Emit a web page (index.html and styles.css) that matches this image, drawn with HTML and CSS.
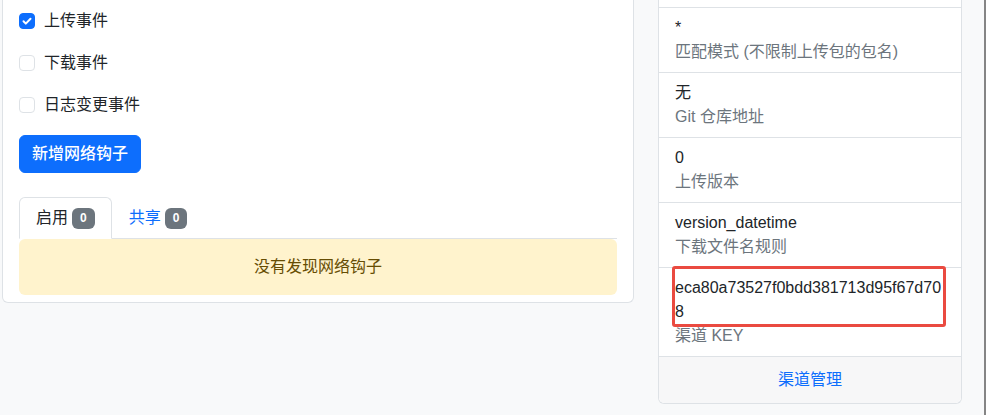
FILE: index.html
```html
<!DOCTYPE html>
<html lang="zh-CN">
<head>
    <meta charset="UTF-8">
    <meta name="viewport" content="width=device-width, initial-scale=1.0">
    <title>渠道详情</title>
    <link rel="stylesheet" href="styles.css">
</head>
<body>
    <div class="page">
        <div class="col-main">
            <div class="card card-cut">
                <div class="card-body">
                    <label class="check">
                        <span class="box checked">
                            <svg viewBox="0 0 16 16" width="16" height="16"><path d="M4.5 8.3l2.3 2.3 4.7-4.9" fill="none" stroke="#fff" stroke-width="2" stroke-linecap="round" stroke-linejoin="round"/></svg>
                        </span>
                        上传事件
                    </label>
                    <label class="check">
                        <span class="box"></span>
                        下载事件
                    </label>
                    <label class="check">
                        <span class="box"></span>
                        日志变更事件
                    </label>

                    <button class="btn btn-primary">新增网络钩子</button>

                    <div class="tabs">
                        <a class="tab active">启用 <span class="badge">0</span></a>
                        <a class="tab">共享 <span class="badge">0</span></a>
                    </div>
                    <div class="alert">没有发现网络钩子</div>
                </div>
            </div>
        </div>

        <div class="col-side">
            <div class="card card-cut">
                <ul class="list">
                    <li class="item stub"></li>
                    <li class="item">
                        <div class="value">*</div>
                        <div class="label">匹配模式 (不限制上传包的包名)</div>
                    </li>
                    <li class="item">
                        <div class="value">无</div>
                        <div class="label">Git 仓库地址</div>
                    </li>
                    <li class="item">
                        <div class="value">0</div>
                        <div class="label">上传版本</div>
                    </li>
                    <li class="item">
                        <div class="value">version_datetime</div>
                        <div class="label">下载文件名规则</div>
                    </li>
                    <li class="item key">
                        <div class="value hash">eca80a73527f0bdd381713d95f67d708</div>
                        <div class="label">渠道 KEY</div>
                        <span class="mark"></span>
                    </li>
                </ul>
                <div class="card-footer"><a>渠道管理</a></div>
            </div>
        </div>
    </div>
</body>
</html>
```

FILE: styles.css
```css
body {
    margin: 0;
    min-height: 100vh;
    box-sizing: border-box;
    border-right: 2px solid #858585;
    background-color: #f8f9fa;
    font-family: "Liberation Sans", "Noto Sans CJK SC", sans-serif;
    font-size: 16px;
    line-height: 24px;
    color: #212529;
}

.page {
    display: flex;
    align-items: flex-start;
    gap: 24px;
    padding-left: 2px;
}

.col-main {
    width: 632px;
}

.col-side {
    width: 304px;
}

.card {
    background-color: #fff;
    border: 1px solid #dee2e6;
    border-radius: 6px;
}

/* top of the cards is scrolled out of view */
.card-cut {
    border-top: 0;
    border-radius: 0 0 6px 6px;
}

.card-body {
    padding: 9px 16px 7px;
}

.check {
    display: flex;
    align-items: center;
    gap: 9px;
    height: 24px;
    margin-bottom: 18px;
}

.box {
    width: 16px;
    height: 16px;
    box-sizing: border-box;
    border: 1px solid #dee2e6;
    border-radius: 4px;
    background-color: #fff;
}

.box.checked {
    background-color: #0d6efd;
    border-color: #0d6efd;
}

.box svg {
    display: block;
    margin: -1px;
}

.btn {
    display: block;
    font-family: inherit;
    font-size: 16px;
    line-height: 24px;
    padding: 6px 12px;
    border-radius: 6px;
    cursor: pointer;
}

.btn-primary {
    background-color: #0d6efd;
    border: 1px solid #0d6efd;
    color: #fff;
    font-weight: 500;
}

.tabs {
    display: flex;
    margin-top: 24px;
    border-bottom: 1px solid #dee2e6;
}

.tab {
    display: flex;
    align-items: center;
    gap: 4px;
    padding: 8px 16px;
    margin-bottom: -1px;
    border: 1px solid transparent;
    border-radius: 6px 6px 0 0;
    color: #0d6efd;
    cursor: pointer;
}

.tab.active {
    background-color: #fff;
    border-color: #dee2e6 #dee2e6 #fff;
    color: #212529;
}

.badge {
    display: inline-block;
    padding: 0 8px;
    height: 21px;
    line-height: 21px;
    font-size: 12px;
    font-weight: 700;
    color: #fff;
    background-color: #6c757d;
    border-radius: 6px;
}

.alert {
    padding: 16px;
    background-color: #fff3cd;
    color: #664d03;
    text-align: center;
    border-radius: 6px;
}

.list {
    list-style: none;
    margin: 0;
    padding: 0;
}

.item {
    padding: 8px 16px;
    border-bottom: 1px solid #dee2e6;
}

.item.stub {
    height: 7px;
    padding: 0;
}

.item.key {
    position: relative;
}

.value {
    color: #212529;
}

.hash {
    word-break: break-all;
}

.label {
    color: #6c757d;
}

/* red highlight drawn over the key */
.mark {
    position: absolute;
    top: -2px;
    left: 13px;
    width: 274px;
    height: 61px;
    box-sizing: border-box;
    border: 3px solid #ea4a40;
    border-radius: 3px;
}

.card-footer {
    padding: 11px 16px;
    background-color: #f7f7f8;
    text-align: center;
    border-radius: 0 0 6px 6px;
}

.card-footer a {
    color: #0d6efd;
    cursor: pointer;
}
```
